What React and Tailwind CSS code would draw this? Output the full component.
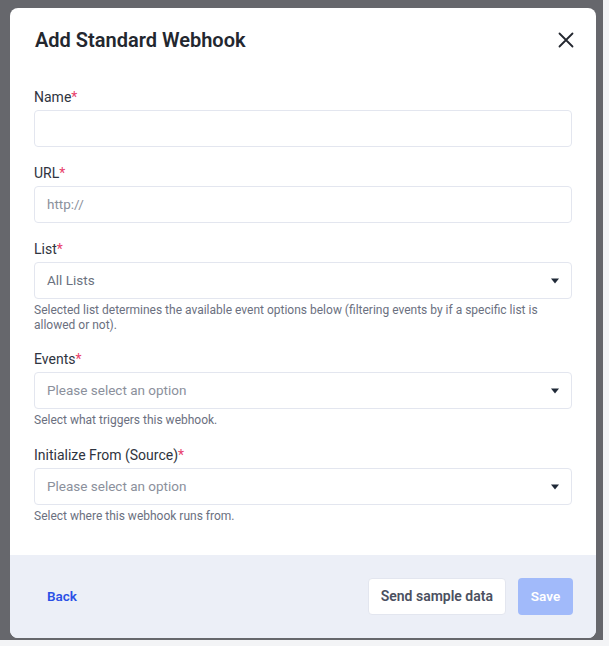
import React from 'react';

const Caret = () => (
  <svg width="10" height="6" viewBox="0 0 10 6" className="shrink-0">
    <path d="M1 0.5h8L5 5.5z" fill="#1f2937" />
  </svg>
);

const Label = ({ children }) => (
  <div className="text-[14px] text-[#2f3440] mb-[4px] leading-[18px]">
    {children}
    <span className="text-[#e8416b]">*</span>
  </div>
);

const SelectBox = ({ value, muted }) => (
  <div className="h-[37px] rounded-[4px] border border-[#e3e6ef] bg-white flex items-center justify-between pl-[12px] pr-[11px]">
    <span className={`text-[13.5px] ${muted ? 'text-[#8b909c]' : 'text-[#6b7280]'}`}>{value}</span>
    <Caret />
  </div>
);

const Help = ({ children }) => (
  <p className="text-[12px] leading-[15px] text-[#6b7080] mt-[4px]">{children}</p>
);

export default function App() {
  return (
    <div className="w-[609px] h-[646px] bg-[#f3f4f6]" style={{ fontFamily: 'Roboto, "Liberation Sans", sans-serif' }}>
      <div className="w-[603px] h-[640px] bg-[#66676c] pl-[10px] pt-[8px]">
        <div className="w-[586px] h-[630px] bg-white rounded-[8px] overflow-hidden flex flex-col">
          {/* header */}
          <div className="flex items-center justify-between pl-[25px] pr-[22px] h-[64px]">
            <h1 className="text-[20px] font-semibold text-[#23272f]">Add Standard Webhook</h1>
            <svg width="16" height="16" viewBox="0 0 16 16">
              <path d="M1.5 1.5l13 13M14.5 1.5l-13 13" stroke="#23272f" strokeWidth="1.8" strokeLinecap="round" />
            </svg>
          </div>

          {/* body */}
          <div className="flex-1 px-[24px] pt-[16px]">
            <Label>Name</Label>
            <div className="h-[37px] rounded-[4px] border border-[#e3e6ef]" />

            <div className="mt-[17px]">
              <Label>URL</Label>
              <div className="h-[37px] rounded-[4px] border border-[#e3e6ef] flex items-center pl-[12px]">
                <span className="text-[13.5px] text-[#8b909c]">http://</span>
              </div>
            </div>

            <div className="mt-[17px]">
              <Label>List</Label>
              <SelectBox value="All Lists" />
              <Help>
                Selected list determines the available event options below (filtering events by if a specific list is
                allowed or not).
              </Help>
            </div>

            <div className="mt-[17px]">
              <Label>Events</Label>
              <SelectBox value="Please select an option" muted />
              <Help>Select what triggers this webhook.</Help>
            </div>

            <div className="mt-[18px]">
              <Label>Initialize From (Source)</Label>
              <SelectBox value="Please select an option" muted />
              <Help>Select where this webhook runs from.</Help>
            </div>
          </div>

          {/* footer */}
          <div className="h-[83px] bg-[#eceff7] flex items-center justify-between pl-[37px] pr-[23px]">
            <button className="text-[13.5px] font-semibold text-[#2a4fe6]">Back</button>
            <div className="flex items-center gap-[12px]">
              <button className="h-[37px] px-[12px] rounded-[4px] bg-white border border-[#e3e6ef] text-[14px] font-semibold text-[#4b5060]">
                Send sample data
              </button>
              <button className="h-[37px] w-[55px] rounded-[4px] bg-[#a1bafa] text-[13.5px] font-semibold text-white">
                Save
              </button>
            </div>
          </div>
        </div>
      </div>
    </div>
  );
}
